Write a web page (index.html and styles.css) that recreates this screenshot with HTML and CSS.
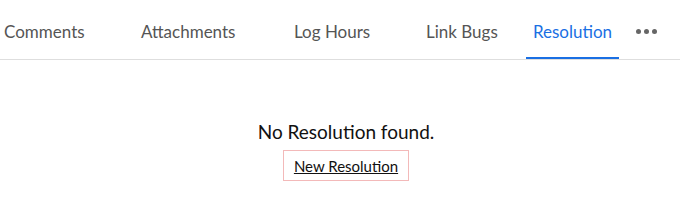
FILE: index.html
```html
<!DOCTYPE html>
<html>
<head>
<meta charset="utf-8">
<link rel="stylesheet" href="styles.css">
</head>
<body>
<div class="tabbar">
  <div class="tab t-comments">Comments</div>
  <div class="tab t-attach">Attachments</div>
  <div class="tab t-log">Log Hours</div>
  <div class="tab t-link">Link Bugs</div>
  <div class="tab t-res active">Resolution</div>
  <div class="tab t-more"><span class="dot"></span><span class="dot"></span><span class="dot"></span></div>
</div>
<div class="empty">
  <div class="empty-title">No Resolution found.</div>
  <a class="new-btn" href="#">New Resolution</a>
</div>
</body>
</html>
```
FILE: styles.css
```css
html, body {
  margin: 0;
  padding: 0;
  background: #fff;
  font-family: Lato, "Open Sans", sans-serif;
}
.tabbar {
  display: flex;
  height: 59px;
  border-bottom: 1px solid #dedede;
  margin-left: -3px;
  box-sizing: content-box;
}
.tab {
  box-sizing: border-box;
  height: 59px;
  padding: 5px 7px 0;
  display: flex;
  align-items: center;
  font-size: 17px;
  color: #555;
  border-bottom: 2px solid transparent;
  white-space: nowrap;
}
.t-comments { width: 137px; }
.t-attach { width: 153px; }
.t-log { width: 132px; }
.t-link { width: 107px; }
.t-res { width: 93px; justify-content: center; }
.tab.active {
  color: #1a6fe3;
  border-bottom-color: #1a6fe3;
}
.t-more {
  gap: 3px;
  padding-left: 17px;
}
.dot {
  width: 5px;
  height: 5px;
  border-radius: 50%;
  background: #666;
}
.empty {
  display: flex;
  flex-direction: column;
  align-items: center;
  padding-top: 60px;
  padding-left: 12px;
}
.empty-title {
  font-size: 19px;
  color: #111;
  line-height: 24px;
}
.new-btn {
  margin-top: 6px;
  box-sizing: border-box;
  width: 126px;
  height: 31px;
  display: flex;
  align-items: center;
  justify-content: center;
  border: 1px solid #f3b9b9;
  color: #111;
  font-size: 15px;
  text-decoration: underline;
}
```
